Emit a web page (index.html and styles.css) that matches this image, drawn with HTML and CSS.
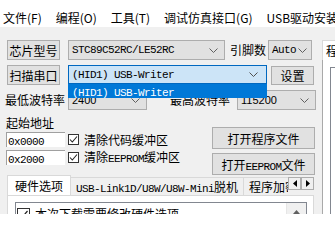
FILE: index.html
```html
<!DOCTYPE html>
<html>
<head>
<meta charset="utf-8">
<link rel="stylesheet" href="styles.css">
</head>
<body>
<div class="menubar">
  <span class="menu">文件(F)</span>
  <span class="menu">编程(O)</span>
  <span class="menu">工具(T)</span>
  <span class="menu">调试仿真接口(G)</span>
  <span class="menu">USB驱动安装</span>
</div>
<div class="main">
  <div class="left">
    <div class="row r1">
      <button class="btn b-chip">芯片型号</button>
      <div class="combo c-chip"><span class="mono">STC89C52RC/LE52RC</span><svg class="chev" width="9" height="5" viewBox="0 0 9 5"><polyline points="0.5,0.5 4.5,4.5 8.5,0.5" fill="none" stroke="#606060"/></svg></div>
      <span class="lbl l-pins">引脚数</span>
      <div class="combo c-auto"><span class="mono">Auto</span><svg class="chev" width="9" height="5" viewBox="0 0 9 5"><polyline points="0.5,0.5 4.5,4.5 8.5,0.5" fill="none" stroke="#606060"/></svg></div>
    </div>
    <div class="row r2">
      <button class="btn b-scan">扫描串口</button>
      <div class="combo c-port"><span class="mono">(HID1) USB-Writer</span><svg class="chev" width="9" height="5" viewBox="0 0 9 5"><polyline points="0.5,0.5 4.5,4.5 8.5,0.5" fill="none" stroke="#505050"/></svg>
        <div class="popup"><span class="mono">(HID1) USB-Writer</span></div>
      </div>
      <button class="btn b-set">设置</button>
    </div>
    <div class="row r3">
      <span class="lbl l-baud">最低波特率</span>
      <div class="combo c-baud1"><span class="num">2400</span><svg class="chev" width="9" height="5" viewBox="0 0 9 5"><polyline points="0.5,0.5 4.5,4.5 8.5,0.5" fill="none" stroke="#606060"/></svg></div>
      <span class="lbl l-baud2">最高波特率</span>
      <div class="combo c-baud2"><span class="num">115200</span><svg class="chev" width="9" height="5" viewBox="0 0 9 5"><polyline points="0.5,0.5 4.5,4.5 8.5,0.5" fill="none" stroke="#606060"/></svg></div>
    </div>
    <div class="addr">
      <div class="addr-left">
        <div class="addr-title">起始地址</div>
        <div class="addr-row">
          <div class="tb"><span class="mono">0x0000</span></div>
          <svg class="cb" width="11" height="11" viewBox="0 0 11 11"><rect x="0.5" y="0.5" width="10" height="10" fill="#fff" stroke="#333"/><polyline points="2,5.5 4.3,8 9,2.5" fill="none" stroke="#222" stroke-width="1.1"/></svg>
          <span class="cb-lbl">清除代码缓冲区</span>
        </div>
        <div class="addr-row">
          <div class="tb"><span class="mono">0x2000</span></div>
          <svg class="cb" width="11" height="11" viewBox="0 0 11 11"><rect x="0.5" y="0.5" width="10" height="10" fill="#fff" stroke="#333"/><polyline points="2,5.5 4.3,8 9,2.5" fill="none" stroke="#222" stroke-width="1.1"/></svg>
          <span class="cb-lbl">清除<span class="mono">EEPROM</span>缓冲区</span>
        </div>
      </div>
      <div class="addr-right">
        <button class="btn b-open">打开程序文件</button>
        <button class="btn b-open b-open2">打开<span class="mono">EEPROM</span>文件</button>
      </div>
    </div>
    <div class="tabctl">
      <div class="tabhead">
        <div class="tabstrip">
          <div class="tab sel">硬件选项</div>
          <div class="tab"><span class="mono">USB-Link1D/U8W/U8W-Mini</span>脱机</div>
          <div class="tab">程序加密后传输</div>
        </div>
        <div class="arrows">
          <div class="arrow"><svg width="4" height="7" viewBox="0 0 4 7"><polygon points="4,0 0,3.5 4,7" fill="#000"/></svg></div>
          <div class="arrow"><svg width="4" height="7" viewBox="0 0 4 7"><polygon points="0,0 4,3.5 0,7" fill="#000"/></svg></div>
        </div>
      </div>
      <div class="tabbody">
        <div class="lb">
          <div class="lb-items">
            <div class="lb-row">
              <svg class="cb2" width="13" height="13" viewBox="0 0 13 13"><rect x="0.5" y="0.5" width="12" height="12" fill="#fff" stroke="#333"/><polyline points="2.5,6.5 5,9.5 10.5,3" fill="none" stroke="#222" stroke-width="1.2"/></svg>
              <span>本次下载需要修改硬件选项</span>
            </div>
          </div>
          <div class="lb-scroll"><svg width="7" height="4" viewBox="0 0 7 4"><polygon points="0,4 3.5,0 7,4" fill="#606060"/></svg></div>
        </div>
      </div>
    </div>
  </div>
  <div class="right">
    <div class="rtab">程序文件</div>
    <div class="rbody">
      <div class="rbox"></div>
    </div>
  </div>
</div>
</body>
</html>
```
FILE: styles.css
```css
* { box-sizing: border-box; margin: 0; padding: 0; }
body {
  margin: 0;
  width: 335px;
  height: 240px;
  overflow: hidden;
  background: #fff;
  color: #000;
  font-family: "Noto Sans CJK SC", "Noto Sans", sans-serif;
  font-size: 12px;
}
.mono {
  font-family: "Liberation Mono", "Noto Sans CJK SC", monospace;
  font-size: 11px;
  letter-spacing: -0.6px;
}
.num {
  font-family: "Liberation Sans", sans-serif;
  font-size: 11px;
}
.menubar {
  height: 27px;
  padding: 9px 0 0 3px;
  display: flex;
  gap: 14px;
  line-height: 17px;
  background: #fff;
  white-space: nowrap;
}
.main {
  height: 187px;
  background: #f0f0f0;
  display: flex;
  overflow: hidden;
}
.left {
  width: 322px;
  flex: none;
  padding-top: 13px;
}
.row {
  display: flex;
  align-items: center;
  height: 20px;
}
.r1, .r2 { padding-left: 7px; }
.r2 { margin-top: 5px; align-items: flex-start; }
.r3 { margin-top: 5px; padding-left: 5px; }
.btn {
  font: inherit;
  color: #000;
  background: #e1e1e1;
  border: 1px solid #adadad;
  height: 20px;
  padding: 0;
  text-align: center;
  white-space: nowrap;
  flex: none;
}
.b-chip, .b-scan { width: 53px; }
.b-set { width: 43px; height: 19px; margin-left: 4px; margin-top: 1px; }
.combo {
  display: flex;
  align-items: center;
  justify-content: space-between;
  height: 20px;
  background: #e1e1e1;
  border: 1px solid #adadad;
  padding: 0 6px 0 3px;
  flex: none;
  white-space: nowrap;
}
.chev { flex: none; }
.c-chip { margin-left: 8px; width: 157px; }
.lbl { line-height: 20px; white-space: nowrap; flex: none; }
.l-pins { margin-left: 5px; width: 36px; }
.c-auto { margin-left: 2px; width: 44px; padding-right: 4px; }
.c-port {
  margin-left: 8px;
  width: 199px;
  height: 19px;
  background: #cce4f7;
  border-color: #0068c0;
  position: relative;
  padding-right: 8px;
}
.popup {
  position: absolute;
  left: -1px;
  top: 18px;
  width: 199px;
  height: 14px;
  background: #0078d7;
  color: #fff;
  padding-left: 4px;
  line-height: 14px;
  z-index: 2;
}
.l-baud { width: 60px; }
.c-baud1 { margin-left: 3px; width: 79px; }
.l-baud2 { margin-left: 23px; width: 60px; }
.c-baud2 { margin-left: 7px; width: 79px; }
.addr {
  display: flex;
  margin-top: 4px;
}
.addr-left {
  width: 212px;
  padding-left: 6px;
}
.addr-title {
  height: 18px;
  line-height: 18px;
}
.addr-row {
  display: flex;
  align-items: center;
  height: 15px;
  white-space: nowrap;
}
.addr-row + .addr-row { margin-top: 3px; }
.tb {
  width: 59px;
  height: 15px;
  background: #fff;
  border-top: 1px solid #a0a0a0;
  border-left: 1px solid #a0a0a0;
  padding-left: 1px;
  line-height: 14px;
  flex: none;
}
.cb { margin-left: 3px; flex: none; }
.cb-lbl { margin-left: 5px; line-height: 15px; }
.addr-right {
  width: 103px;
  padding-top: 13px;
}
.b-open { display: block; width: 103px; height: 22px; }
.b-open2 { margin-top: 4px; }
.tabctl {
  margin-left: 7px;
  width: 307px;
}
.tabhead {
  display: flex;
  height: 20px;
}
.tabstrip {
  flex: 1;
  display: flex;
  align-items: flex-end;
  overflow: hidden;
  height: 20px;
}
.tab {
  height: 18px;
  border: 1px solid #d9d9d9;
  border-bottom: none;
  background: #f0f0f0;
  padding: 0 5px;
  line-height: 17px;
  white-space: nowrap;
  flex: none;
}
.tab + .tab { margin-left: -1px; }
.tab.sel {
  height: 20px;
  background: #fff;
  padding: 0 7px;
  line-height: 19px;
  position: relative;
  z-index: 1;
}
.arrows {
  display: flex;
  margin-top: 2px;
  height: 13px;
}
.arrow {
  width: 13px;
  height: 13px;
  border: 1px solid #adadad;
  background: #f0f0f0;
  display: flex;
  align-items: center;
  justify-content: center;
}
.tabbody {
  height: 60px;
  border: 1px solid #d9d9d9;
  background: #fff;
  padding: 6px 6px 0 7px;
}
.lb {
  height: 40px;
  border: 1px solid #828790;
  background: #fff;
  display: flex;
}
.lb-items {
  flex: 1;
  padding: 4px 0 0 1px;
}
.lb-row {
  display: flex;
  align-items: center;
  gap: 5px;
  white-space: nowrap;
  line-height: 14px;
}
.cb2 { flex: none; }
.lb-scroll {
  width: 20px;
  background: #f0f0f0;
  border-left: 1px solid #e6e6e6;
  display: flex;
  justify-content: center;
  padding-top: 7px;
}
.right {
  flex: 1;
  padding-top: 13px;
  overflow: hidden;
}
.rtab {
  height: 20px;
  width: 60px;
  border: 1px solid #d9d9d9;
  border-bottom: none;
  background: #fff;
  padding-left: 3px;
  line-height: 19px;
  white-space: nowrap;
  overflow: hidden;
}
.rbody {
  height: 160px;
  border-left: 1px solid #a9a9a9;
  background: #fff;
  padding: 7px 0 0 7px;
}
.rbox {
  height: 150px;
  border-top: 1px solid #828790;
  border-left: 1px solid #828790;
  background: #fff;
}
```
